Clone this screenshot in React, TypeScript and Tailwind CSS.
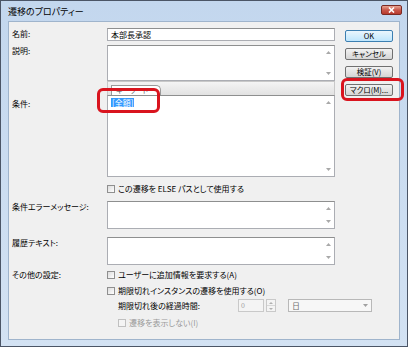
import React from 'react';

const font = "font-['Noto_Sans_CJK_JP',sans-serif] [font-feature-settings:'palt']";

const Arrows = () => (
  <div className="flex w-[12px] flex-col items-center justify-between py-[5px]">
    <svg width="5" height="3" viewBox="0 0 5 3"><path d="M0 3 L2.5 0 L5 3 Z" fill="#a8a8a8" /></svg>
    <svg width="5" height="3" viewBox="0 0 5 3"><path d="M0 0 L2.5 3 L5 0 Z" fill="#a8a8a8" /></svg>
  </div>
);

const TextBox = ({ h, children }: { h: string; children?: React.ReactNode }) => (
  <div className={`flex w-[228px] border border-[#abadb3] border-t-[#8e8f8f] bg-white ${h}`}>
    <div className="flex-1 px-[3px] pt-[1px]">{children}</div>
    <Arrows />
  </div>
);

const Check = ({ label, disabled }: { label: string; disabled?: boolean }) => (
  <div className="flex h-[10px] items-center gap-[3px]">
    <div className={`h-[8px] w-[8px] border ${disabled ? 'border-[#c0c0c0] bg-[#f4f4f4]' : 'border-[#8f8f8f] bg-gradient-to-br from-[#dcdcdc] to-white'}`} />
    <span className={`whitespace-nowrap leading-[10px] ${disabled ? 'text-[#9a9a9a]' : 'text-black'}`}>{label}</span>
  </div>
);

const Button = ({ label, primary }: { label: string; primary?: boolean }) => (
  <div
    className={`flex h-[12px] w-[48px] items-center justify-center whitespace-nowrap rounded-[2px] border text-[7.5px] leading-none ${
      primary
        ? 'border-[#3c7fb1] bg-gradient-to-b from-[#eaf6fd] to-[#bee6fd]'
        : 'border-[#707070] bg-gradient-to-b from-[#f2f2f2] to-[#d5d5d5]'
    }`}
  >
    {label}
  </div>
);

const Row = ({ label, labelPad, children }: { label: string; labelPad?: string; children: React.ReactNode }) => (
  <div className="flex">
    <div className={`w-[95px] shrink-0 whitespace-nowrap leading-[10px] ${labelPad || 'pt-0'}`}>{label}</div>
    {children}
  </div>
);

export default function App() {
  return (
    <div className={`h-[347px] w-[416px] bg-white text-[8px] text-black ${font}`}>
      <div className="relative flex h-[347px] w-[408px] flex-col border border-[#4b5566] bg-gradient-to-b from-[#c3d7ee] to-[#d3e2f3] px-[7px] pb-[6px]">
        {/* title bar */}
        <div className="flex h-[20px] items-center justify-between">
          <span className="text-[9px] leading-none text-black">遷移のプロパティー</span>
          <div className="mr-[-2px] mt-[-3px] flex h-[10px] w-[21px] items-center justify-center rounded-[2px] border border-[#7a2a24] bg-gradient-to-b from-[#e8a493] via-[#c9574a] to-[#b8392c]">
            <svg width="7" height="6" viewBox="0 0 7 6">
              <path d="M1 0.5 L6 5.5 M6 0.5 L1 5.5" stroke="white" strokeWidth="1.6" />
            </svg>
          </div>
        </div>

        {/* content */}
        <div className="flex flex-1 border border-[#9fb4cc] bg-[#f0f0f0] pl-[3px] pr-[7px] pt-[6px]">
          <div className="flex w-[323px] shrink-0 flex-col">
            <Row label="名前:" labelPad="pt-[1px]">
              <div className="flex h-[13px] w-[228px] items-center border border-[#abadb3] border-t-[#8e8f8f] bg-white px-[3px] leading-none">
                本部長承認
              </div>
            </Row>
            <div className="mt-[4px]">
              <Row label="説明:" labelPad="pt-[1px]">
                <TextBox h="h-[36px]" />
              </Row>
            </div>
            <Row label="条件:" labelPad="pt-[18px]">
              <div className="flex w-[228px] flex-col">
                <div className="flex h-[14px] items-end border-x border-t border-[#c8c8c8] bg-gradient-to-b from-[#f4f4f4] to-[#e2e2e2] pl-[3px]">
                  <div className="h-[10px] w-[50px] rounded-tr-[5px] border-x border-t border-[#9a9a9a] bg-white px-[4px] text-[7px] leading-[9px] text-[#555]">
                    キーワード
                  </div>
                </div>
                <TextBox h="h-[82px]">
                  <span className="mt-[1px] inline-block bg-[#3399ff] px-[1px] leading-[9px] text-white">[全額]</span>
                </TextBox>
              </div>
            </Row>
            <div className="ml-[95px] mt-[7px]">
              <Check label="この遷移を ELSE パスとして使用する" />
            </div>
            <div className="mt-[7px]">
              <Row label="条件エラーメッセージ:" labelPad="pt-[1px]">
                <TextBox h="h-[28px]" />
              </Row>
            </div>
            <div className="mt-[8px]">
              <Row label="履歴テキスト:" labelPad="pt-[1px]">
                <TextBox h="h-[28px]" />
              </Row>
            </div>
            <div className="mt-[5px]">
              <Row label="その他の設定:">
                <div className="flex flex-col">
                  <Check label="ユーザーに追加情報を要求する(A)" />
                  <div className="mt-[6px]">
                    <Check label="期限切れインスタンスの遷移を使用する(O)" />
                  </div>
                  <div className="ml-[11px] mt-[3px] flex h-[13px] w-max items-center">
                    <span className="w-[120px] leading-none">期限切れ後の経過時間:</span>
                    <div className="flex h-[13px] w-[26px] items-center border border-[#c9c9c9] bg-[#f4f4f4] px-[2px] text-[7px] text-[#a0a0a0]">
                      0
                    </div>
                    <div className="ml-[2px] flex h-[13px] w-[10px] flex-col border border-[#c9c9c9] bg-[#f4f4f4]">
                      <div className="flex flex-1 items-center justify-center border-b border-[#d8d8d8]">
                        <svg width="4" height="2" viewBox="0 0 4 2"><path d="M0 2 L2 0 L4 2 Z" fill="#b0b0b0" /></svg>
                      </div>
                      <div className="flex flex-1 items-center justify-center">
                        <svg width="4" height="2" viewBox="0 0 4 2"><path d="M0 0 L2 2 L4 0 Z" fill="#b0b0b0" /></svg>
                      </div>
                    </div>
                    <div className="ml-[12px] flex h-[13px] w-[84px] items-center justify-between border border-[#b8b8b8] bg-[#f7f7f7] px-[3px] text-[#707070]">
                      <span className="leading-none">日</span>
                      <svg width="5" height="3" viewBox="0 0 5 3"><path d="M0 0 L2.5 3 L5 0 Z" fill="#a0a0a0" /></svg>
                    </div>
                  </div>
                  <div className="ml-[11px] mt-[6px]">
                    <Check label="遷移を表示しない(I)" disabled />
                  </div>
                </div>
              </Row>
            </div>
          </div>

          {/* buttons */}
          <div className="ml-[10px] flex flex-col gap-[6px] pt-[2px]">
            <Button label="OK" primary />
            <Button label="キャンセル" />
            <Button label="検証(V)" />
            <Button label="マクロ(M)..." />
          </div>
        </div>

        {/* highlight boxes */}
        <div className="absolute left-[96px] top-[87px] h-[25px] w-[63px] rounded-[6px] border-[3.5px] border-[#d9141e]" />
        <div className="absolute left-[340px] top-[77px] h-[23px] w-[63px] rounded-[6px] border-[3.5px] border-[#d9141e]" />
      </div>
    </div>
  );
}
